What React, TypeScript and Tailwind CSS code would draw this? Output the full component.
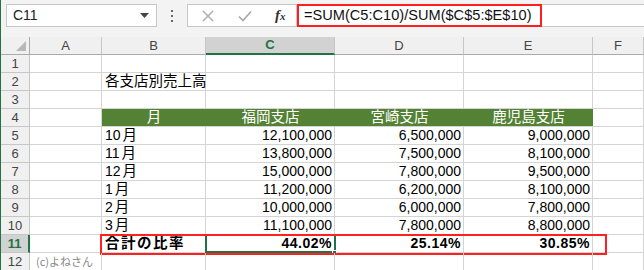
import React from 'react';

const cellFont = { fontFamily: '"Liberation Sans", "Noto Sans CJK JP", sans-serif' };
const jpFont = { fontFamily: '"Noto Sans CJK JP", sans-serif' };

const colLetters = ['A', 'B', 'C', 'D', 'E', 'F'];
const colWidths = ['w-[72px]', 'w-[104px]', 'w-[129px]', 'w-[129px]', 'w-[129px]', 'flex-1'];

const sales = [
  ['10', '12,100,000', '6,500,000', '9,000,000'],
  ['11', '13,800,000', '7,500,000', '8,100,000'],
  ['12', '15,000,000', '7,800,000', '9,500,000'],
  ['1', '11,200,000', '6,200,000', '8,100,000'],
  ['2', '10,000,000', '6,000,000', '7,800,000'],
  ['3', '11,100,000', '7,800,000', '8,800,000'],
];

// one row of the sheet
const Row = ({ num, children, active = false }: { num: number; children?: React.ReactNode; active?: boolean }) => (
  <div className="flex h-[18px] relative">
    <div
      className={`w-[29px] shrink-0 flex items-center justify-center text-[13px] border-r border-b ${
        active ? 'bg-[#d2d2d2] text-[#217346] border-r-2 border-r-[#217346] border-b-[#c6c6c6] font-bold' : 'bg-[#f0f0f0] text-[#444] border-[#c6c6c6]'
      }`}
      style={{ fontFamily: '"Liberation Sans", sans-serif' }}
    >
      {num}
    </div>
    {children}
  </div>
);

const Cell = ({ w, children, right = false, className = '' }: { w: string; children?: React.ReactNode; right?: boolean; className?: string }) => (
  <div
    className={`${w} shrink-0 border-r border-b border-[#d4d4d4] flex items-end whitespace-nowrap text-[14px] leading-[17px] text-black ${
      right ? 'justify-end pr-[2px]' : 'pl-[3px]'
    } ${className}`}
    style={cellFont}
  >
    <span className="leading-[17px]">{children}</span>
  </div>
);

const EmptyCells = () => (
  <>
    {colWidths.map((w, i) => (
      <Cell key={i} w={w} />
    ))}
  </>
);

export default function App() {
  return (
    <div className="w-[644px] h-[270px] overflow-hidden bg-white border-l border-[#217346] flex flex-col">
      {/* formula bar */}
      <div className="h-[37px] shrink-0 bg-[#f3f3f3] flex items-start pt-[4px]">
        <div className="ml-[5px] w-[151px] h-[23px] bg-white border border-[#c6c6c6] flex items-center justify-between pl-[6px] pr-[7px]">
          <span className="text-[14px] text-[#222]" style={{ fontFamily: '"Liberation Sans", sans-serif' }}>C11</span>
          <svg width="9" height="5" viewBox="0 0 9 5"><path d="M0 0h9L4.5 5z" fill="#444" /></svg>
        </div>
        <div className="w-[30px] h-[23px] flex flex-col items-center justify-center gap-[3px]">
          <span className="w-[2px] h-[2px] bg-[#666]" />
          <span className="w-[2px] h-[2px] bg-[#666]" />
          <span className="w-[2px] h-[2px] bg-[#666]" />
        </div>
        <div className="w-[110px] h-[23px] bg-white border border-[#c6c6c6] flex items-center">
          <svg className="ml-[14px]" width="12" height="12" viewBox="0 0 12 12">
            <path d="M1 1l10 10M11 1L1 11" stroke="#a8a8a8" strokeWidth="1.4" />
          </svg>
          <svg className="ml-[24px]" width="14" height="12" viewBox="0 0 14 12">
            <path d="M1 6.5l4 4L13 1.5" stroke="#a8a8a8" strokeWidth="1.6" fill="none" />
          </svg>
          <span className="ml-[23px] italic text-[15px] text-[#333] font-bold" style={{ fontFamily: '"Liberation Serif", serif' }}>
            f<span className="text-[11px]">x</span>
          </span>
        </div>
        <div className="flex-1 h-[23px] bg-white border-y border-[#c6c6c6] flex">
          <div className="w-[245px] h-[23px] -mt-[1px] border-2 border-[#ff1f1f] flex items-center pl-[5px]">
            <span className="text-[14.6px] text-[#111] whitespace-nowrap" style={{ fontFamily: '"Liberation Sans", sans-serif' }}>
              =SUM(C5:C10)/SUM($C$5:$E$10)
            </span>
          </div>
        </div>
      </div>

      {/* column headers */}
      <div className="flex h-[18px] shrink-0" style={{ fontFamily: '"Liberation Sans", sans-serif' }}>
        <div className="w-[29px] shrink-0 bg-[#f0f0f0] border-r border-b border-[#ababab] relative">
          <svg className="absolute right-[3px] bottom-[3px]" width="10" height="10" viewBox="0 0 10 10">
            <path d="M10 0v10H0z" fill="#b8b8b8" />
          </svg>
        </div>
        {colLetters.map((c, i) =>
          c === 'C' ? (
            <div key={c} className={`${colWidths[i]} shrink-0 bg-[#d2d2d2] border-b-2 border-[#217346] border-r border-r-[#c6c6c6] flex items-center justify-center text-[13px] text-[#217346] font-bold`}>
              {c}
            </div>
          ) : (
            <div key={c} className={`${colWidths[i]} shrink-0 bg-[#f0f0f0] border-r border-[#c6c6c6] border-b border-b-[#ababab] flex items-center justify-center text-[13px] text-[#444]`}>
              {c}
            </div>
          )
        )}
      </div>

      <Row num={1}><EmptyCells /></Row>
      <Row num={2}>
        <Cell w="w-[72px]" />
        <Cell w="w-[104px]" className="overflow-visible">
          <span className="text-[14.5px]">各支店別売上高</span>
        </Cell>
        <Cell w="w-[129px]" />
        <Cell w="w-[129px]" />
        <Cell w="w-[129px]" />
        <Cell w="flex-1" />
      </Row>
      <Row num={3}><EmptyCells /></Row>
      <Row num={4}>
        <Cell w="w-[72px]" />
        {['月', '福岡支店', '宮崎支店', '鹿児島支店'].map((t, i) => (
          <div
            key={t}
            className={`${i === 0 ? 'w-[104px]' : 'w-[129px]'} shrink-0 bg-[#548235] border-b border-[#d4d4d4] flex items-end justify-center text-white text-[14.5px] leading-[17px]`}
            style={cellFont}
          >
            {t}
          </div>
        ))}
        <Cell w="flex-1" />
      </Row>
      {sales.map((r, idx) => (
        <Row key={idx} num={5 + idx}>
          <Cell w="w-[72px]" />
          <Cell w="w-[104px]">
            {r[0]}
            <span className="text-[14.5px] ml-[2px]">月</span>
          </Cell>
          <Cell w="w-[129px]" right>{r[1]}</Cell>
          <Cell w="w-[129px]" right>{r[2]}</Cell>
          <Cell w="w-[129px]" right>{r[3]}</Cell>
          <Cell w="flex-1" />
        </Row>
      ))}
      <Row num={11} active>
        <Cell w="w-[72px]" />
        <Cell w="w-[104px]" className="font-bold">
          <span className="tracking-[1.5px] text-[14.5px]">合計の比率</span>
        </Cell>
        <Cell w="w-[129px]" right className="font-bold text-[13.5px] tracking-[0.5px]">44.02%</Cell>
        <Cell w="w-[129px]" right className="font-bold text-[13.5px] tracking-[0.5px]">25.14%</Cell>
        <Cell w="w-[129px]" right className="font-bold text-[13.5px] tracking-[0.5px]">30.85%</Cell>
        <Cell w="flex-1" />
        {/* selected cell C11 */}
        <div className="absolute left-[204px] top-[-1px] w-[131px] h-[19px] border-2 border-[#217346] pointer-events-none" />
        <div className="absolute left-[331px] top-[15px] w-[5px] h-[5px] bg-[#217346] border border-white" />
        {/* red outline */}
        <div className="absolute left-[99px] top-[-1px] w-[507px] h-[21px] border-2 border-[#ff2020] pointer-events-none" />
      </Row>
      <Row num={12}>
        <Cell w="w-[72px]" className="overflow-visible">
          <span className="text-[11px] text-[#888] pl-[3px]" style={jpFont}>(c)よねさん</span>
        </Cell>
        <Cell w="w-[104px]" />
        <Cell w="w-[129px]" />
        <Cell w="w-[129px]" />
        <Cell w="w-[129px]" />
        <Cell w="flex-1" />
      </Row>
    </div>
  );
}
